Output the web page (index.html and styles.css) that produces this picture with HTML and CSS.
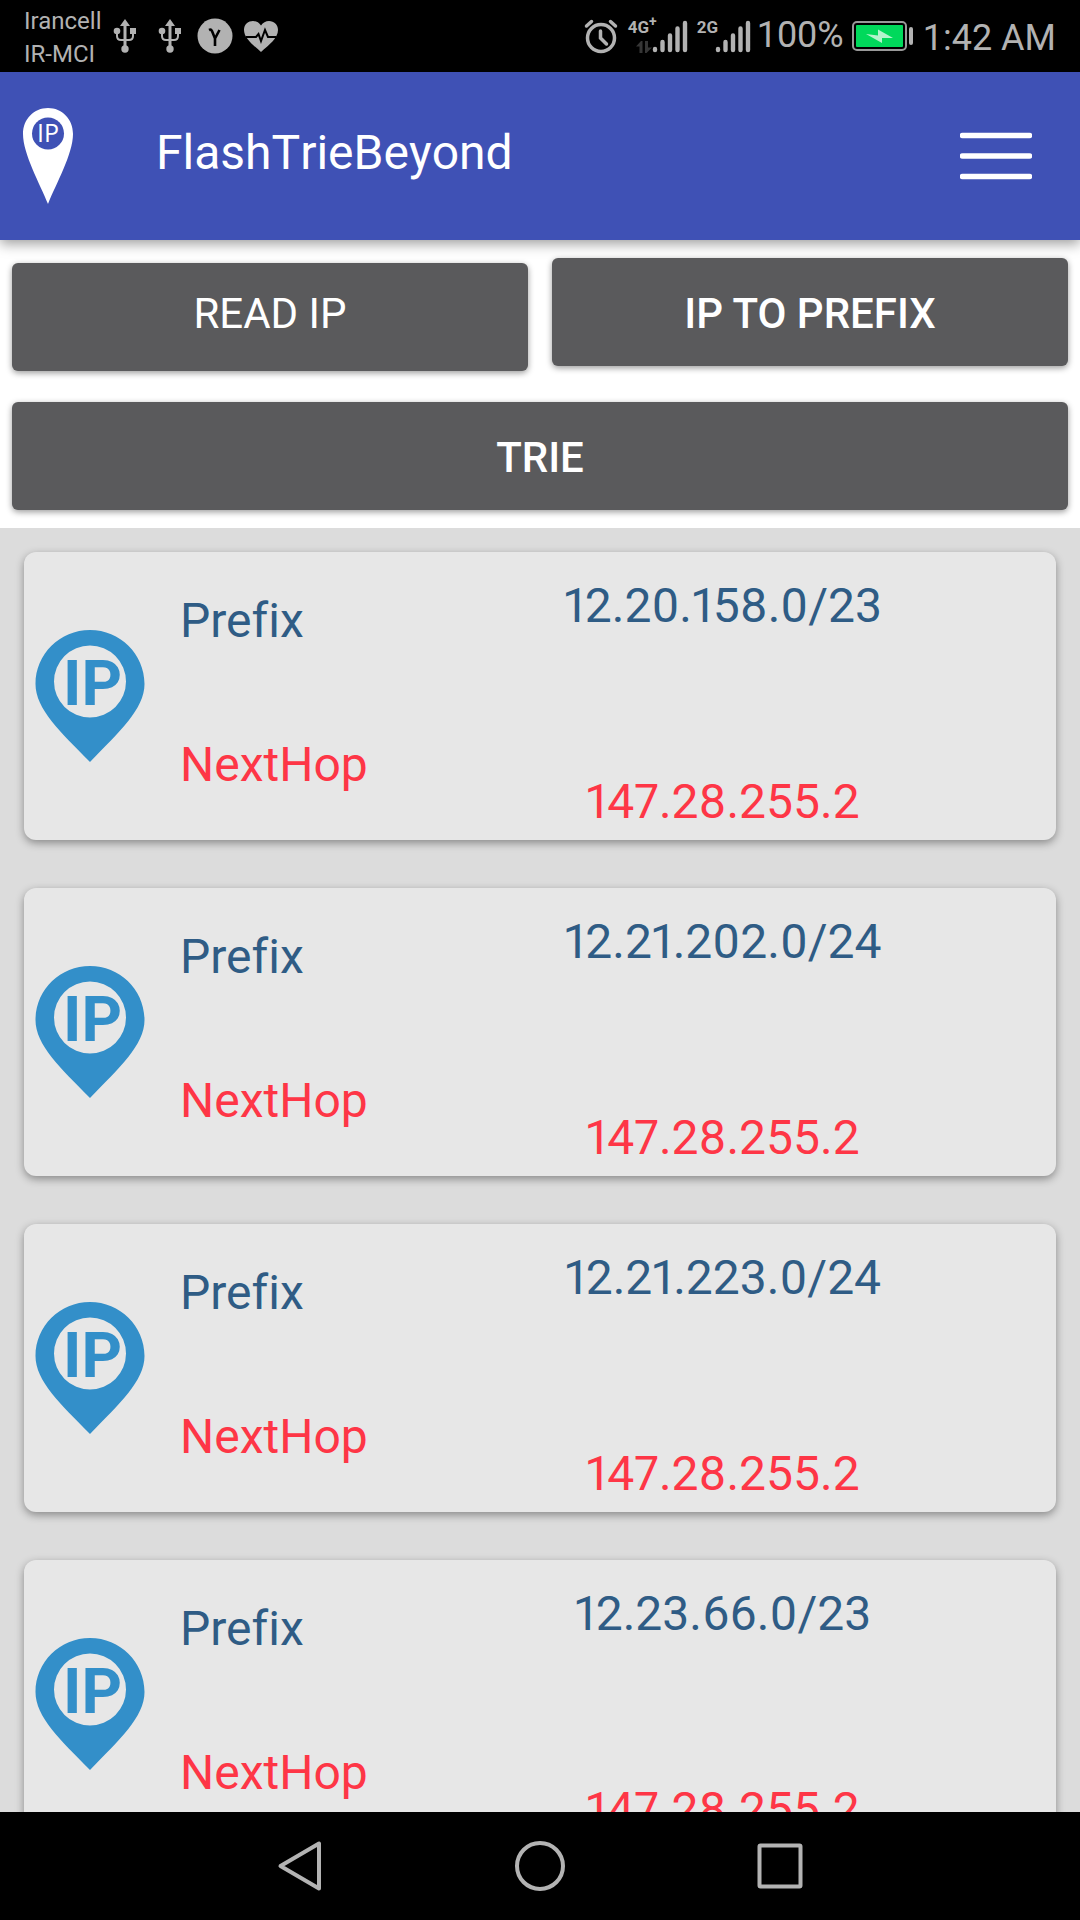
FILE: index.html
```html
<!DOCTYPE html>
<html lang="en">
<head>
<meta charset="utf-8">
<meta name="viewport" content="width=device-width, initial-scale=1">
<title>FlashTrieBeyond</title>
<link rel="stylesheet" href="styles.css">
</head>
<body>
<svg class="symbols" aria-hidden="true">
  <symbol id="usb" viewBox="0 0 24 36">
    <path d="M12 1l5 7h-3.500v22h-3V8H7z"/>
    <path d="M4 13v5q0 4 4 4h8q4 0 4-4v-5" fill="none" stroke="currentColor" stroke-width="2"/>
    <circle cx="4" cy="13" r="3.300"/><path d="M17 10h6v6h-6z"/><circle cx="12" cy="31" r="3.700"/>
  </symbol>
  <symbol id="bars" viewBox="0 0 36 36">
    <path d="M3 31v1M10.500 24v8M18 17.500v14.500M25.500 10.500v21.500M33 5v27" fill="none" stroke="currentColor" stroke-width="4.400" stroke-linecap="round"/>
  </symbol>
  <symbol id="pin" viewBox="0 0 110 132">
    <path fill="#338fc9" fill-rule="evenodd" d="M55 0C25 0 .5 24 .5 54c0 25 25 48 54.500 78 29-30 54.500-53 54.500-78C109.500 24 85 0 55 0zm0 15.500a36 36 0 1 1 0 72 36 36 0 0 1 0-72z"/>
    <text x="28" y="75" class="pin-text">IP</text>
  </symbol>
</svg>

<div class="status">
  <div class="carriers"><span>Irancell</span><span>IR-MCI</span></div>
  <div class="notices">
    <svg width="24" height="36"><use href="#usb"/></svg>
    <svg width="24" height="36"><use href="#usb"/></svg>
    <svg width="36" height="36" viewBox="0 0 36 36"><circle cx="18" cy="18" r="17.500"/><path d="M12 12q2-1 3 1l3 7.500L22.500 12M18 20v8" fill="none" stroke="#000" stroke-width="2.600"/></svg>
    <svg width="36" height="36" viewBox="0 0 36 36"><path d="M18 34C10 27 1 20 1 12 1 6 5.500 3 10 3q5 0 8 4.500Q21 3 26 3c5 0 9 3.500 9 9 0 8-9 15-17 22z"/><path d="M3 19h10l2.500-3 2.500 7 4-11 3 7h8" fill="none" stroke="#000" stroke-width="2"/></svg>
  </div>
  <div class="signals">
    <svg width="36" height="36" viewBox="0 0 36 36" fill="none" stroke="currentColor" stroke-width="3.500" stroke-linecap="round"><circle cx="18" cy="20" r="13.500"/><path d="M17.500 13v7l6 6M3.500 8l5-4.500M32.500 8l-5-4.500"/></svg>
    <div class="network">
      <div class="kind data"><span>4G<sup>+</sup></span><svg width="16" height="12" viewBox="0 0 16 12" fill="#363636"><path d="M0 5.500L5 0h1.500v12h-3V5.500zM9 0h3v6.500h4L10.500 12H9z"/></svg></div>
      <svg width="36" height="36"><use href="#bars"/></svg>
    </div>
    <div class="network">
      <div class="kind"><span>2G</span></div>
      <svg width="36" height="36"><use href="#bars"/></svg>
    </div>
  </div>
  <span class="charge">100%</span>
  <svg class="battery" width="62" height="30" viewBox="0 0 62 30"><rect x="1" y="1" width="53" height="28" rx="4" fill="none" stroke="#999" stroke-width="2"/><rect x="4" y="4" width="47" height="22" rx="1" fill="#00d95b"/><path d="M14 13l12 1.500V8.500l15 8.500-11 0v5z" fill="#b3f4cd"/><rect x="57" y="6" width="4" height="18" rx="2"/></svg>
  <time class="clock">1:42 AM</time>
</div>

<header class="appbar">
  <svg class="logo" width="52" height="96" viewBox="0 0 52 96"><path fill="#fff" d="M26 0C12 0 1 11 1 26c0 20 17 50 25 70 8-20 25-50 25-70C51 11 40 0 26 0z"/><circle cx="26" cy="25.500" r="16" fill="#3f51b5"/><text x="15" y="34" class="logo-text">IP</text></svg>
  <h1>FlashTrieBeyond</h1>
  <button class="menu" aria-label="Menu"><svg width="72" height="48" viewBox="0 0 72 48"><path d="M2.500 3.500h67M2.500 24h67M2.500 44.500h67" stroke="#fff" stroke-width="5.500" stroke-linecap="round"/></svg></button>
</header>

<section class="actions">
  <button class="btn read">READ IP</button>
  <button class="btn">IP TO PREFIX</button>
  <button class="btn wide">TRIE</button>
</section>

<main class="list">
  <article class="card"><svg class="pin" width="110" height="132"><use href="#pin"/></svg><dl><dt class="prefix">Prefix</dt><dd class="prefix">12.20.158.0/23</dd><dt class="hop">NextHop</dt><dd class="hop">147.28.255.2</dd></dl></article>
  <article class="card"><svg class="pin" width="110" height="132"><use href="#pin"/></svg><dl><dt class="prefix">Prefix</dt><dd class="prefix">12.21.202.0/24</dd><dt class="hop">NextHop</dt><dd class="hop">147.28.255.2</dd></dl></article>
  <article class="card"><svg class="pin" width="110" height="132"><use href="#pin"/></svg><dl><dt class="prefix">Prefix</dt><dd class="prefix">12.21.223.0/24</dd><dt class="hop">NextHop</dt><dd class="hop">147.28.255.2</dd></dl></article>
  <article class="card"><svg class="pin" width="110" height="132"><use href="#pin"/></svg><dl><dt class="prefix">Prefix</dt><dd class="prefix">12.23.66.0/23</dd><dt class="hop">NextHop</dt><dd class="hop">147.28.255.2</dd></dl></article>
</main>

<nav class="navbar">
  <button aria-label="Back"><svg width="52" height="52" viewBox="0 0 52 52"><path d="M45 3.500v45L6.500 26z"/></svg></button>
  <button aria-label="Home"><svg width="52" height="52" viewBox="0 0 52 52"><circle cx="26" cy="26" r="23"/></svg></button>
  <button aria-label="Recent apps"><svg width="52" height="52" viewBox="0 0 52 52"><rect x="5.500" y="5.500" width="41" height="41" rx="1"/></svg></button>
</nav>
</body>
</html>
```
FILE: styles.css
```css
* { box-sizing: border-box; }

body {
  margin: 0;
  height: 100vh;
  display: flex;
  flex-direction: column;
  overflow: hidden;
  background: #fff;
  font-family: Roboto, "Noto Sans", sans-serif;
  font-variant-ligatures: none;
}

svg { display: block; flex: none; }
button { border: 0; padding: 0; background: none; font: inherit; color: inherit; }
.symbols { width: 0; height: 0; position: absolute; }

.status {
  flex: none;
  display: flex;
  align-items: center;
  height: 72px;
  padding: 0 24px;
  background: #000;
  color: #b2b2b2;
  fill: currentColor;
}
.carriers {
  display: flex;
  flex-direction: column;
  font-size: 24px;
  line-height: 33px;
  padding-top: 3px;
}
.notices { display: flex; gap: 10px; margin-left: 12px; }
.notices svg:nth-child(2) { margin: 0 5px 0 11px; }
.signals { display: flex; gap: 9px; margin-left: auto; }
.network { display: flex; }
.kind {
  width: 18px;
  display: flex;
  flex-direction: column;
  align-items: flex-end;
  gap: 5px;
  font-size: 17px;
  font-weight: 700;
  line-height: 18px;
}
.data { width: 24px; }
.kind span { width: 100%; white-space: nowrap; }
.kind sup { font-size: 14px; line-height: 0; }
.charge { font-size: 36px; line-height: 44px; margin-left: 6px; padding-bottom: 2px; }
.battery { margin-left: 8px; }
.clock { font-size: 36px; line-height: 44px; margin-left: 9px; padding-top: 4px; }

.appbar {
  flex: none;
  display: flex;
  align-items: center;
  height: 168px;
  padding: 0 48px 0 22px;
  background: #3f51b5;
  color: #fff;
  box-shadow: 0 4px 12px rgba(0, 0, 0, .38);
  z-index: 1;
}
.logo-text { font: 25px "Open Sans", sans-serif; fill: #fff; }
.appbar h1 {
  flex: 1;
  margin: 0;
  padding: 0 0 8px 82px;
  font-size: 48px;
  font-weight: 400;
  font-kerning: none;
}

.actions {
  flex: none;
  display: grid;
  grid-template-columns: 1fr 1fr;
  gap: 36px 24px;
  padding: 18px 12px;
}
.btn {
  height: 108px;
  padding-top: 2px;
  border-radius: 6px;
  background: #5a5a5c;
  color: #fff;
  font-size: 42px;
  font-weight: 500;
  box-shadow: 0 2px 6px rgba(0, 0, 0, .4);
}
.read { margin: 5px 0 -5px; padding: 0 0 8px; font-weight: 400; font-kerning: none; }
.wide { grid-column: 1 / -1; }

.list {
  flex: 1;
  min-height: 0;
  overflow: hidden;
  display: flex;
  flex-direction: column;
  gap: 48px;
  padding: 24px;
  background: #dcdcdc;
}
.card {
  flex: none;
  display: flex;
  align-items: center;
  height: 288px;
  padding-left: 11px;
  border-radius: 12px;
  background: #e7e7e7;
  box-shadow: 0 3px 8px rgba(0, 0, 0, .38);
}
.pin-text { font: bold 63px Roboto, sans-serif; fill: #338fc9; }
.card dl {
  flex: 1;
  align-self: stretch;
  display: grid;
  grid-template-columns: 210px 1fr;
  grid-template-rows: 144px 1fr;
  margin: 0;
  padding: 26px 0 10px 35px;
  font-size: 48px;
  line-height: 56px;
}
.card dt { padding-top: 15px; }
.card dd {
  margin: 0;
  text-align: center;
  font-variant-numeric: proportional-nums;
}
.card dd.hop { align-self: end; }
.prefix { color: #2f5c85; }
.hop { color: #fe3646; }

.navbar {
  flex: none;
  display: flex;
  justify-content: center;
  align-items: center;
  gap: 188px;
  height: 108px;
  background: #000;
}
.navbar svg { fill: none; stroke: #b3b3b3; stroke-width: 4; stroke-linejoin: round; }
```
